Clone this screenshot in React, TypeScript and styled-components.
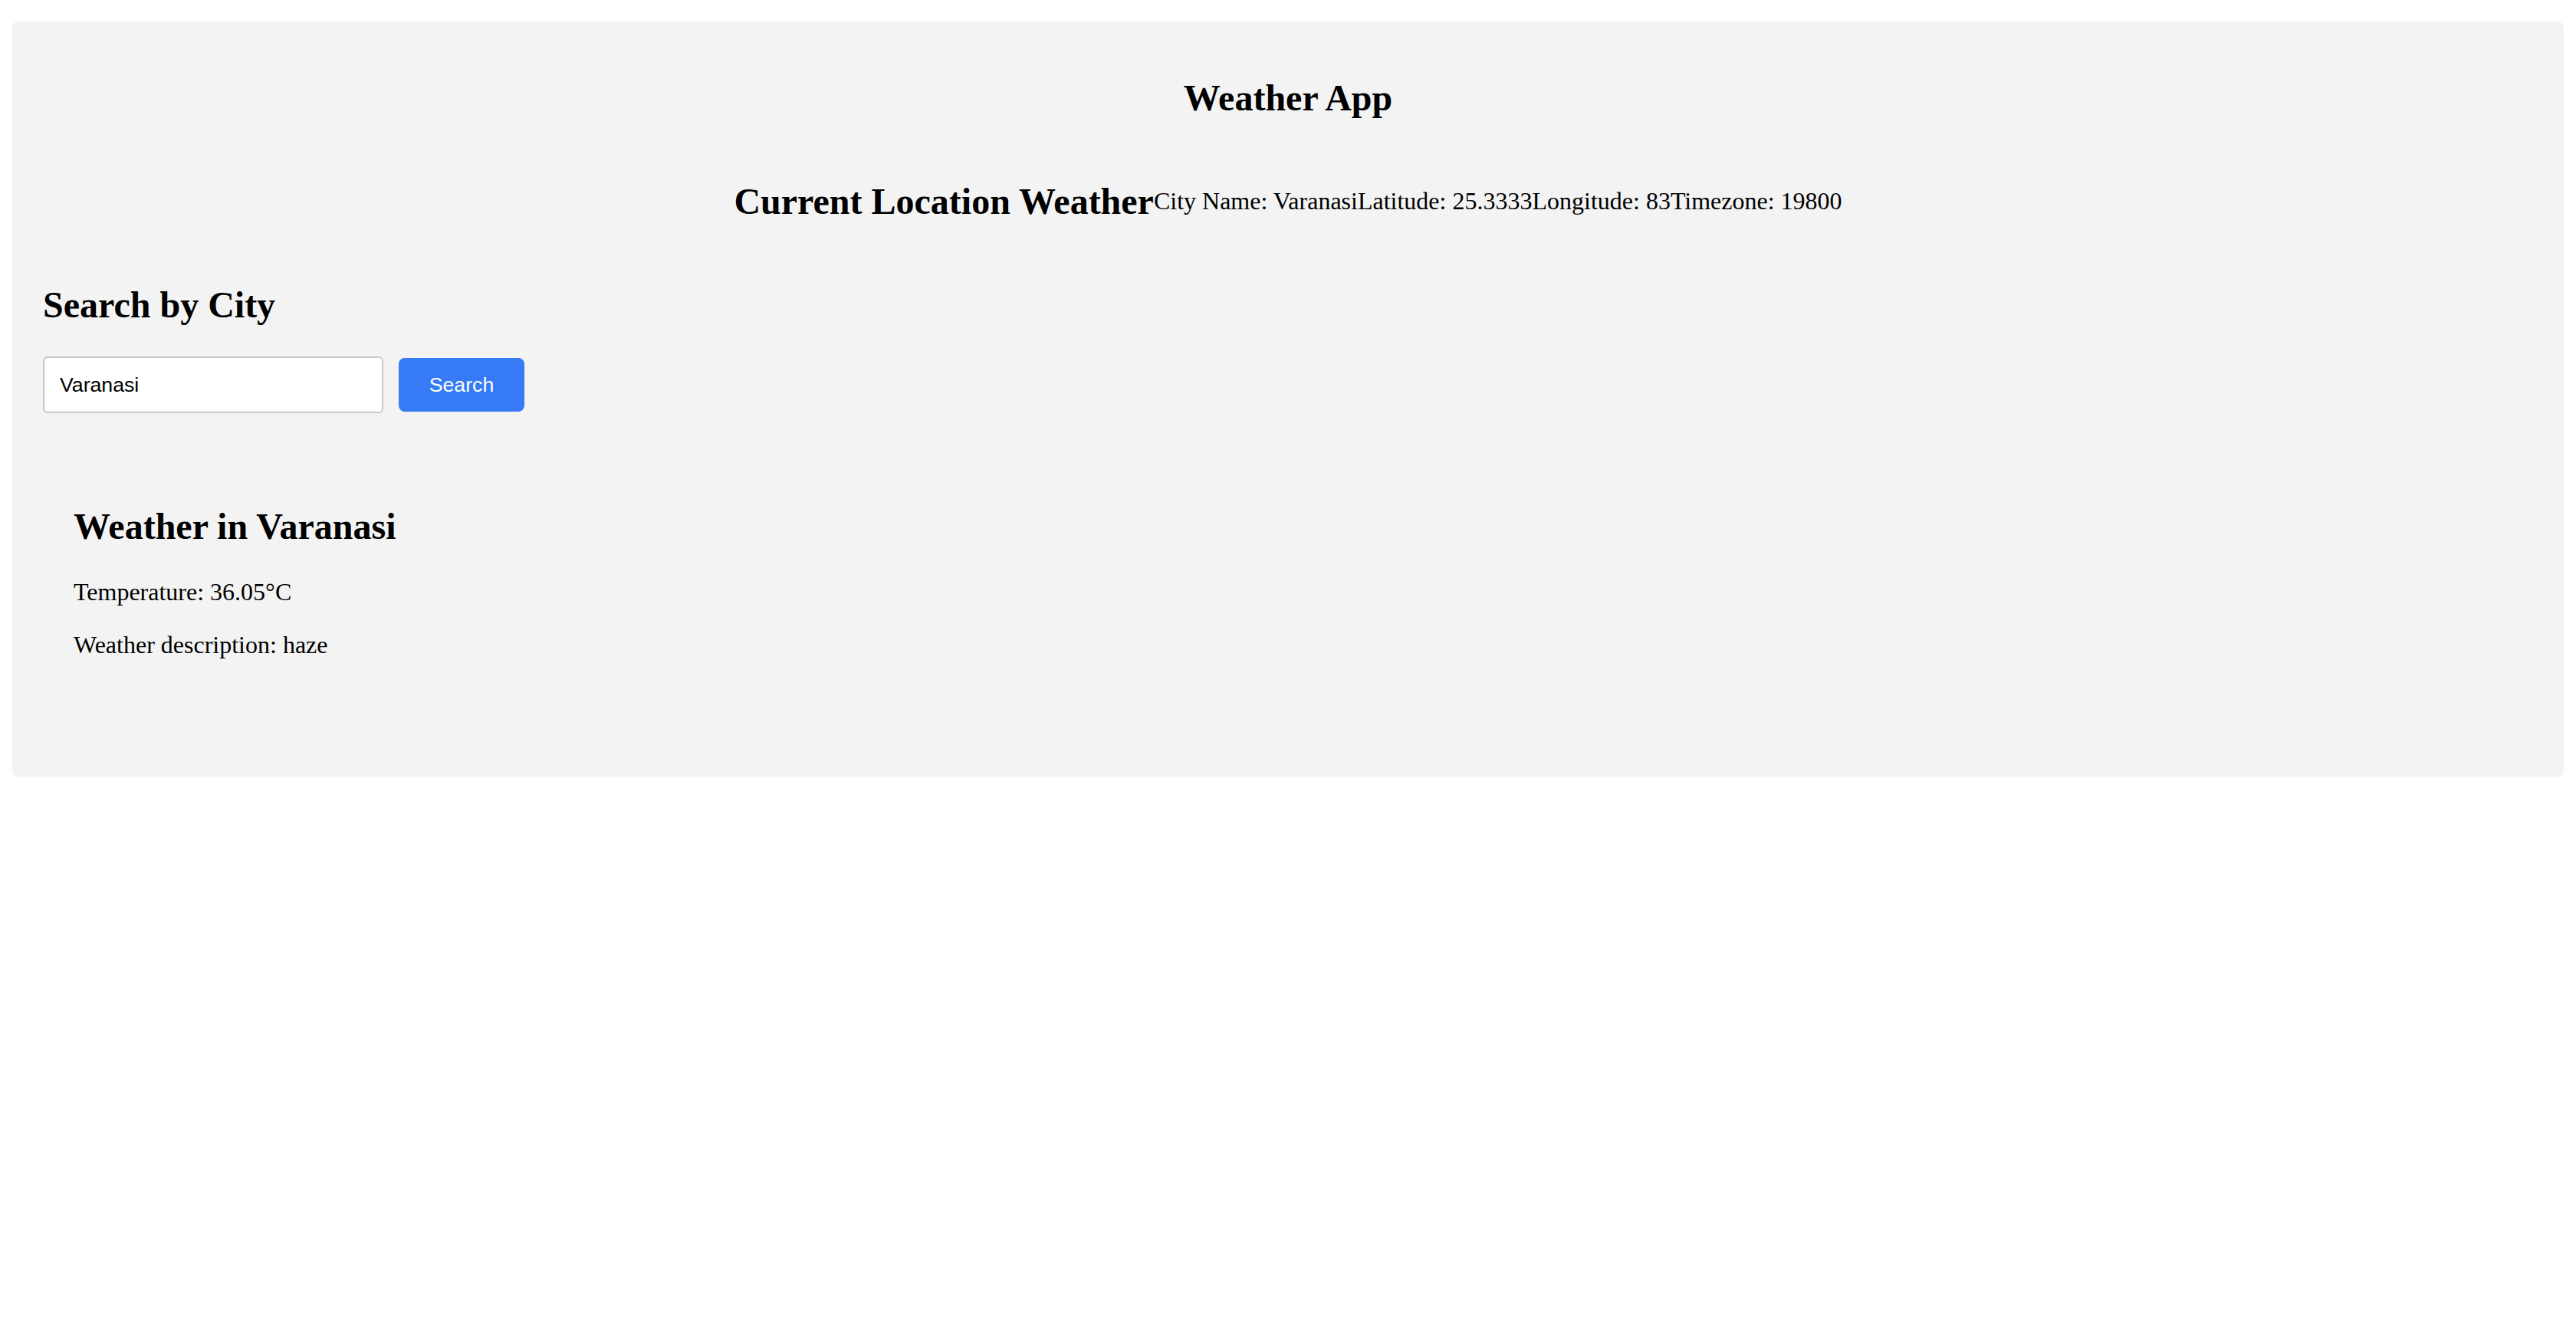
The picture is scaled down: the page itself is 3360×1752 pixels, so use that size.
import styled, { createGlobalStyle } from 'styled-components';

const GlobalStyle = createGlobalStyle`
  body {
    margin: 16px;
    font-family: "Liberation Serif", "Times New Roman", serif;
    font-size: 32px;
    line-height: 1.15;
    color: #000;
    background: #fff;
  }
`;

const Panel = styled.main`
  margin-top: 12px;
  padding: 40px;
  background: #f3f3f3;
  border-radius: 8px;
`;

const Title = styled.h2`
  margin: 32px 0 40px;
  font-size: 48px;
  line-height: normal;
  text-align: center;
`;

const LocationRow = styled.section`
  display: flex;
  justify-content: center;
  align-items: center;

  h2 {
    margin: 40px 0;
    font-size: 48px;
    line-height: normal;
  }

  p {
    margin: 32px 0;
  }
`;

const SearchSection = styled.section`
  h2 {
    margin: 40px 0;
    font-size: 48px;
    line-height: normal;
  }
`;

const SearchBar = styled.div`
  display: flex;
  align-items: center;
  gap: 20px;
`;

const CityInput = styled.input`
  box-sizing: border-box;
  width: 444px;
  height: 74px;
  padding: 0 20px;
  border: 2px solid #c8c8c8;
  border-radius: 6px;
  background: #fff;
  font-family: "Liberation Sans", Arial, sans-serif;
  font-size: 26.67px;
  color: #000;
  outline: none;
`;

const SearchButton = styled.button`
  box-sizing: border-box;
  width: 164px;
  height: 70px;
  padding: 0;
  border: none;
  border-radius: 8px;
  background: #367bf5;
  color: #fff;
  font-family: "Liberation Sans", Arial, sans-serif;
  font-size: 26.67px;
  cursor: pointer;
`;

const WeatherCard = styled.section`
  margin: 40px 0 42px;
  padding: 40px;

  h2 {
    margin: 40px 0;
    font-size: 48px;
    line-height: normal;
  }

  p {
    margin: 32px 0;
  }
`;

export default function App() {
  const location = {
    name: 'Varanasi',
    lat: 25.3333,
    lon: 83,
    timezone: 19800,
  };

  return (
    <>
      <GlobalStyle />
      <Panel>
        <Title>Weather App</Title>

        <LocationRow>
          <h2>Current Location Weather</h2>
          <p>City Name: {location.name}</p>
          <p>Latitude: {location.lat}</p>
          <p>Longitude: {location.lon}</p>
          <p>Timezone: {location.timezone}</p>
        </LocationRow>

        <SearchSection>
          <h2>Search by City</h2>
          <SearchBar>
            <CityInput type="text" defaultValue="Varanasi" />
            <SearchButton>Search</SearchButton>
          </SearchBar>
        </SearchSection>

        <WeatherCard>
          <h2>Weather in Varanasi</h2>
          <p>Temperature: 36.05°C</p>
          <p>Weather description: haze</p>
        </WeatherCard>
      </Panel>
    </>
  );
}
